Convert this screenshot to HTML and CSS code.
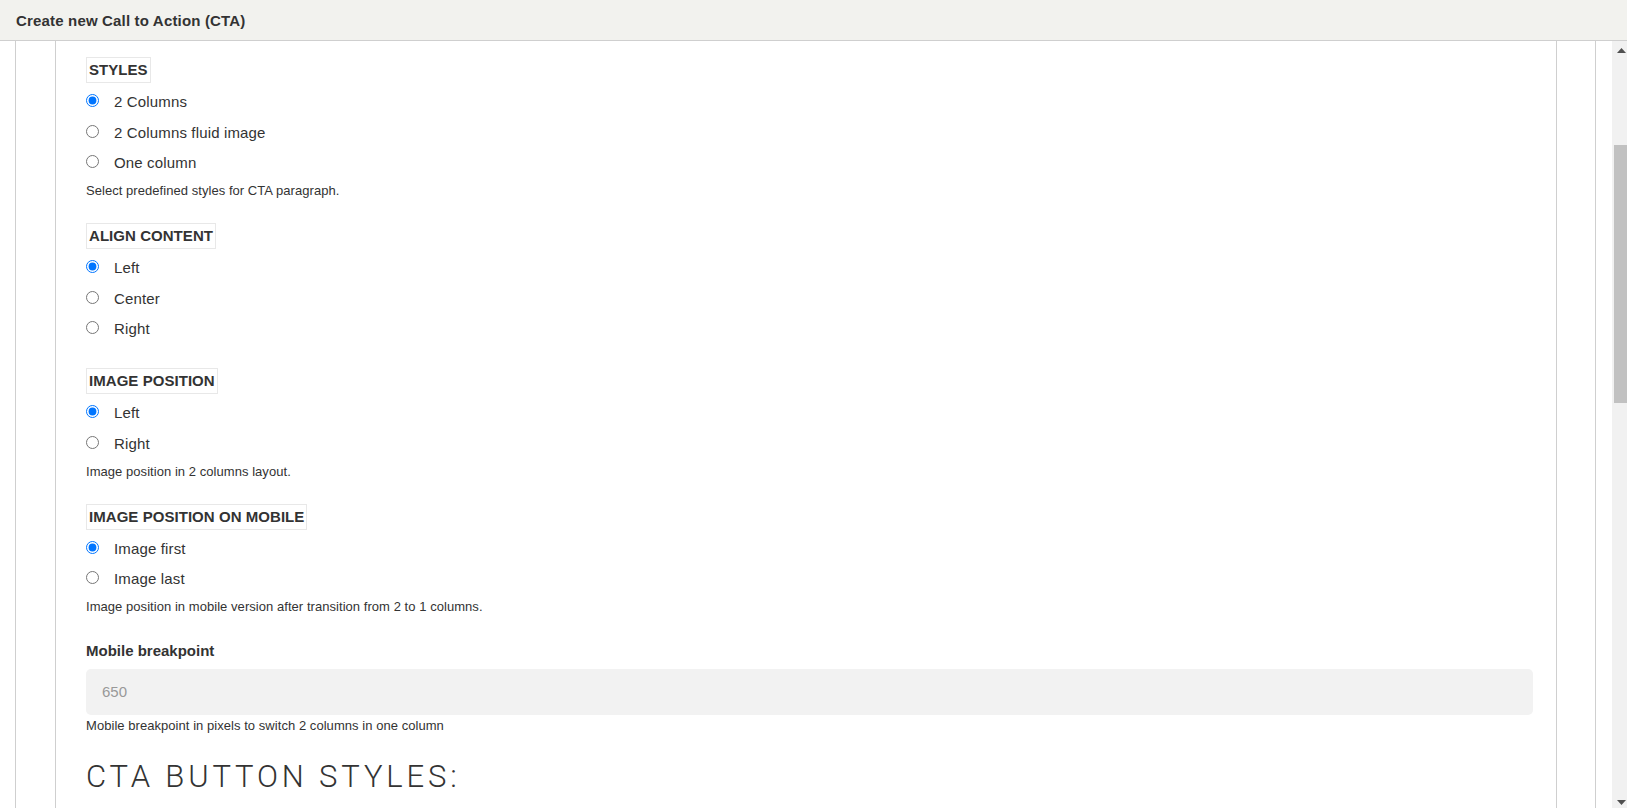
FILE: index.html
```html
<!DOCTYPE html>
<html>
<head>
    <link rel="stylesheet" href="styles.css">
    <title>Create new Call to Action (CTA)</title>
</head>
<body>
    <div class="dialog-title">Create new Call to Action (CTA)</div>
    <div class="dialog-body">
        <div class="scroll-area">
            <div class="outer">
                <div class="form">
                    <div class="group">
                        <div class="group-label">STYLES</div>
                        <div class="options">
                            <label class="option"><input type="radio" name="style" checked>2 Columns</label>
                            <label class="option"><input type="radio" name="style">2 Columns fluid image</label>
                            <label class="option"><input type="radio" name="style">One column</label>
                        </div>
                        <div class="description">Select predefined styles for CTA paragraph.</div>
                    </div>

                    <div class="group">
                        <div class="group-label">ALIGN CONTENT</div>
                        <div class="options">
                            <label class="option"><input type="radio" name="align" checked>Left</label>
                            <label class="option"><input type="radio" name="align">Center</label>
                            <label class="option"><input type="radio" name="align">Right</label>
                        </div>
                    </div>

                    <div class="group">
                        <div class="group-label">IMAGE POSITION</div>
                        <div class="options">
                            <label class="option"><input type="radio" name="imgpos" checked>Left</label>
                            <label class="option"><input type="radio" name="imgpos">Right</label>
                        </div>
                        <div class="description">Image position in 2 columns layout.</div>
                    </div>

                    <div class="group">
                        <div class="group-label">IMAGE POSITION ON MOBILE</div>
                        <div class="options">
                            <label class="option"><input type="radio" name="mobpos" checked>Image first</label>
                            <label class="option"><input type="radio" name="mobpos">Image last</label>
                        </div>
                        <div class="description">Image position in mobile version after transition from 2 to 1 columns.</div>
                    </div>

                    <div class="field">
                        <label class="field-label" for="breakpoint">Mobile breakpoint</label>
                        <input type="text" id="breakpoint" class="text-input" value="650">
                        <div class="description tight">Mobile breakpoint in pixels to switch 2 columns in one column</div>
                    </div>

                    <h2 class="section-title">CTA BUTTON STYLES:</h2>
                </div>
            </div>
        </div>
        <div class="scrollbar">
            <div class="arrow up">
                <svg width="9" height="5" viewBox="0 0 9 5"><polygon points="0,5 4.5,0 9,5" fill="#505050"/></svg>
            </div>
            <div class="thumb"></div>
            <div class="track-rest"></div>
            <div class="arrow down">
                <svg width="9" height="5" viewBox="0 0 9 5"><polygon points="0,0 9,0 4.5,5" fill="#505050"/></svg>
            </div>
        </div>
    </div>
</body>
</html>
```

FILE: styles.css
```css
body {
    margin: 0;
    font-family: "Liberation Sans", Arial, sans-serif;
    color: #333;
    background: #fff;
    overflow: hidden;
}
.dialog-title {
    height: 40px;
    line-height: 41px;
    padding-left: 16px;
    background-color: #f2f2ee;
    border-bottom: 1px solid #cfcfcf;
    font-size: 15px;
    font-weight: bold;
    letter-spacing: 0.17px;
    color: #333;
}
.dialog-body {
    display: flex;
    height: 767px;
}
.scroll-area {
    flex: 1;
    display: flex;
    overflow: hidden;
    padding: 0 16px 0 15px;
}
.outer {
    flex: 1;
    display: flex;
    border-left: 1px solid #cfcfcf;
    border-right: 1px solid #cfcfcf;
    padding: 0 38px 0 39px;
}
.form {
    flex: 1;
    border-left: 1px solid #cfcfcf;
    border-right: 1px solid #cfcfcf;
    padding: 16px 23px 0 30px;
    overflow: hidden;
}
.group {
    margin-bottom: 23px;
}
.group-label {
    display: inline-block;
    border: 1px solid #e8e8e8;
    padding: 3px 2px;
    font-size: 15px;
    font-weight: bold;
    line-height: 18px;
    letter-spacing: 0.05px;
    color: #333;
}
.options {
    margin-top: 4px;
}
.option {
    display: block;
    font-size: 15px;
    line-height: 30.7px;
    height: 30.7px;
    letter-spacing: 0.15px;
}
.option input {
    width: 13px;
    height: 13px;
    margin: 0 15px 0 0;
    accent-color: #0075ff;
}
.description {
    margin-top: 3px;
    font-size: 13px;
    line-height: 18px;
    letter-spacing: 0.05px;
    color: #333;
}
.description.tight {
    margin-top: 2px;
}
.field {
    padding-top: 3px;
}
.field-label {
    display: block;
    font-size: 15px;
    font-weight: bold;
    line-height: 18px;
    margin-bottom: 9px;
}
.text-input {
    display: block;
    box-sizing: border-box;
    width: 100%;
    height: 46px;
    padding: 0 16px;
    border: none;
    border-radius: 5px;
    background-color: #f2f2f2;
    font-family: "Liberation Sans", Arial, sans-serif;
    font-size: 15px;
    color: #999;
}
.section-title {
    margin: 23px 0 0 0;
    font-family: Roboto, "Liberation Sans", sans-serif;
    font-weight: 300;
    font-size: 31px;
    line-height: 37px;
    letter-spacing: 3.85px;
    color: #333;
}
.scrollbar {
    width: 15px;
    display: flex;
    flex-direction: column;
    background-color: #f1f1f1;
}
.arrow {
    height: 17px;
    padding-left: 5px;
    box-sizing: border-box;
}
.arrow svg {
    display: block;
}
.arrow.up {
    padding-top: 7px;
}
.arrow.down {
    padding-top: 9px;
}
.thumb {
    margin: 87px 0 0 2px;
    height: 258px;
    background-color: #c1c1c1;
}
.track-rest {
    flex: 1;
}
```
